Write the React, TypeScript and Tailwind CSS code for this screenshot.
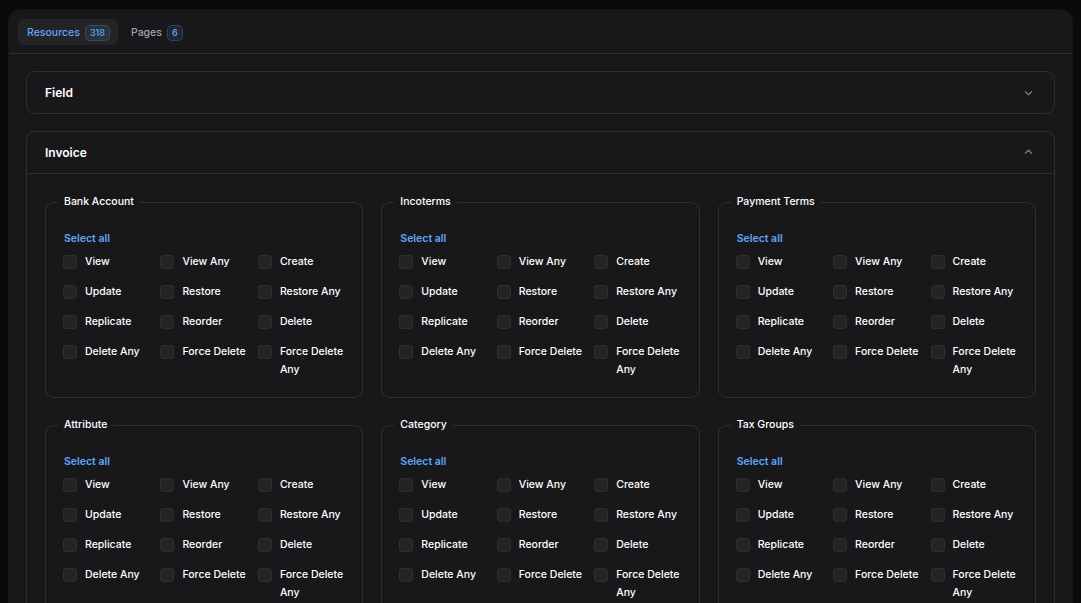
import React from "react";

const perms = [
  "View",
  "View Any",
  "Create",
  "Update",
  "Restore",
  "Restore Any",
  "Replicate",
  "Reorder",
  "Delete",
  "Delete Any",
  "Force Delete",
  "Force Delete Any",
];

const groups = [
  "Bank Account",
  "Incoterms",
  "Payment Terms",
  "Attribute",
  "Category",
  "Tax Groups",
];

function Chevron({ up }: { up?: boolean }) {
  return (
    <svg
      width="15"
      height="15"
      viewBox="0 0 20 20"
      fill="currentColor"
      className="text-[#8b8b93]"
    >
      {up ? (
        <path
          fillRule="evenodd"
          d="M9.47 6.47a.75.75 0 0 1 1.06 0l4.25 4.25a.75.75 0 1 1-1.06 1.06L10 8.06l-3.72 3.72a.75.75 0 0 1-1.06-1.06l4.25-4.25Z"
          clipRule="evenodd"
        />
      ) : (
        <path
          fillRule="evenodd"
          d="M5.22 8.22a.75.75 0 0 1 1.06 0L10 11.94l3.72-3.72a.75.75 0 1 1 1.06 1.06l-4.25 4.25a.75.75 0 0 1-1.06 0L5.22 9.28a.75.75 0 0 1 0-1.06Z"
          clipRule="evenodd"
        />
      )}
    </svg>
  );
}

function Group({ name }: { name: string }) {
  return (
    <fieldset className="rounded-[9px] border border-white/10 px-[18px] pb-[18px] pt-[19px]">
      <legend className="-ml-[6px] px-[6px] text-[10.5px] font-medium leading-[18px] text-white">
        {name}
      </legend>
      <div className="flex flex-col gap-[5px]">
        <div className="text-[10.5px] font-semibold leading-[18px] text-[#60a5fa]">
          Select all
        </div>
        <div className="grid grid-cols-3 gap-x-[12px] gap-y-[12px]">
          {perms.map((p) => (
            <label key={p} className="flex items-start gap-x-[9px]">
              <span className="mt-[3px] block h-[12px] w-[12px] shrink-0 rounded-[3px] bg-white/5 ring-1 ring-white/10" />
              <span className="text-[10.5px] font-medium leading-[18px] text-white">
                {p}
              </span>
            </label>
          ))}
        </div>
      </div>
    </fieldset>
  );
}

export default function App() {
  return (
    <div
      className="h-[603px] w-full overflow-hidden bg-[#0a0a0b] px-[9px] pt-[10px]"
      style={{ fontFamily: "Inter, 'Noto Sans', sans-serif" }}
    >
      <div className="rounded-[12px] bg-[#18181b] ring-1 ring-white/5">
        <div className="flex gap-x-[4px] border-b border-white/10 px-[9px] pb-[8px] pt-[9px]">
          <div className="flex h-[26px] items-center gap-x-[6px] rounded-[6px] bg-white/5 pl-[9px] pr-[9px] pt-[1px]">
            <span className="text-[10.5px] font-medium text-[#60a5fa]">
              Resources
            </span>
            <span className="flex h-[14px] items-center rounded-[4px] bg-[#60a5fa]/10 px-[4px] text-[9px] font-medium text-[#60a5fa] ring-1 ring-[#60a5fa]/30">
              318
            </span>
          </div>
          <div className="flex h-[26px] items-center gap-x-[6px] rounded-[6px] px-[9px] pt-[1px]">
            <span className="text-[10.5px] font-medium text-[#a1a1aa]">
              Pages
            </span>
            <span className="flex h-[14px] items-center rounded-[4px] bg-[#60a5fa]/10 px-[4px] text-[9px] font-medium text-[#60a5fa] ring-1 ring-[#60a5fa]/30">
              6
            </span>
          </div>
        </div>
        <div className="flex flex-col gap-[17px] px-[17px] pt-[17px] pb-[17px]">
          <div className="rounded-[9px] border border-white/10">
            <div className="flex h-[41px] items-center justify-between px-[18px]">
              <span className="text-[12px] font-semibold leading-[18px] text-white">
                Field
              </span>
              <Chevron />
            </div>
          </div>
          <div className="rounded-[9px] border border-white/10">
            <div className="flex h-[42px] items-center justify-between border-b border-white/10 px-[18px]">
              <span className="text-[12px] font-semibold leading-[18px] text-white">
                Invoice
              </span>
              <Chevron up />
            </div>
            <div className="grid grid-cols-3 gap-x-[18px] gap-y-[18px] px-[18px] pt-[19px] pb-[18px]">
              {groups.map((g) => (
                <Group key={g} name={g} />
              ))}
            </div>
          </div>
        </div>
      </div>
    </div>
  );
}
